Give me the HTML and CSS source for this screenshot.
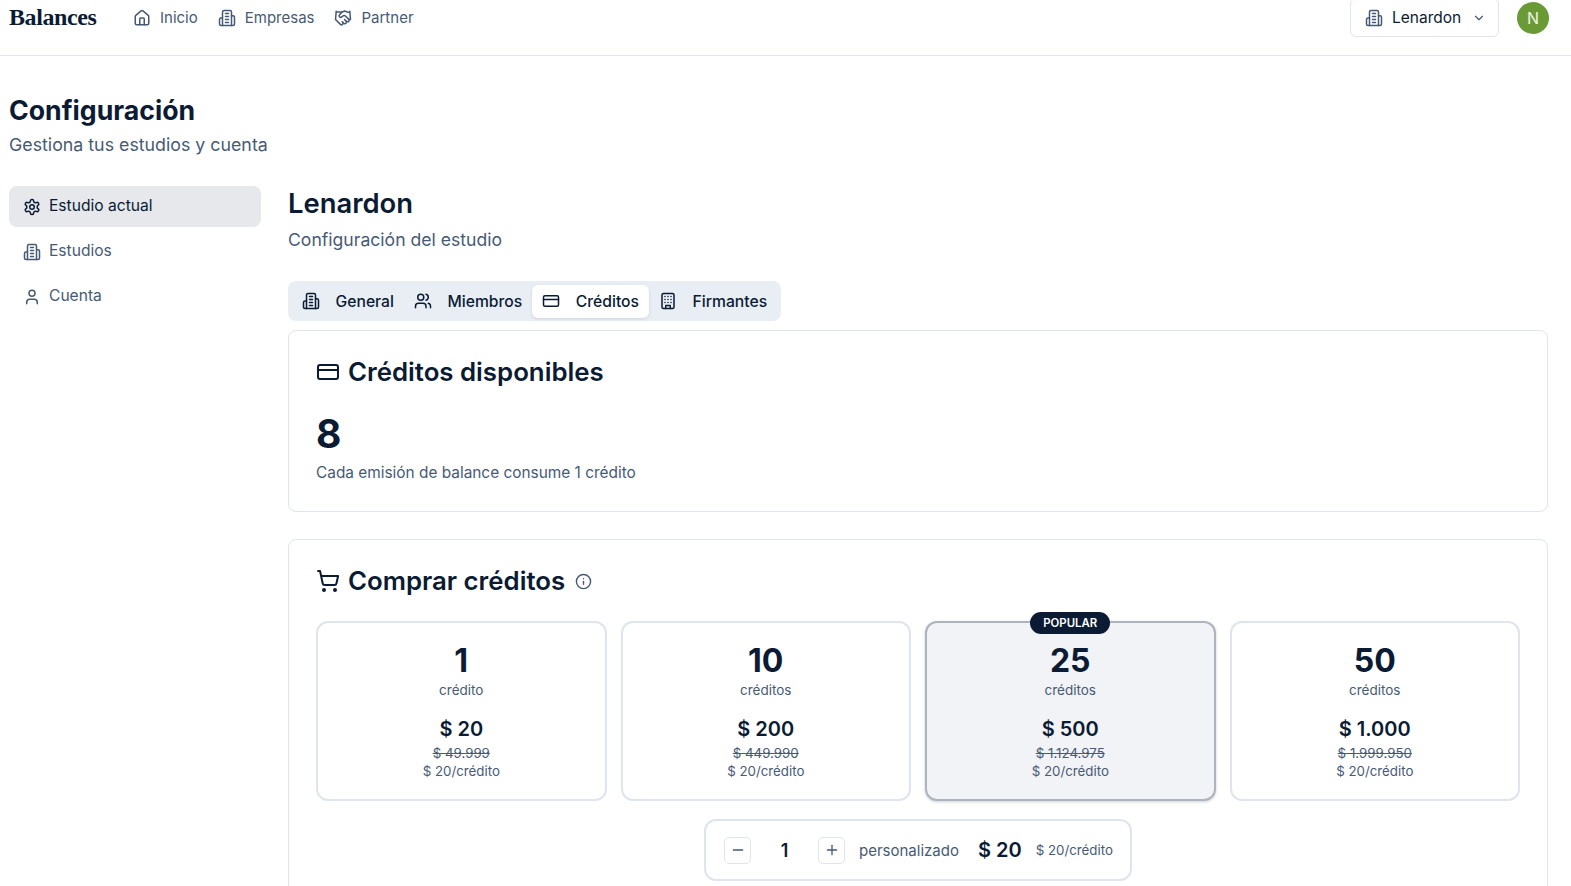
FILE: index.html
```html
<!DOCTYPE HTML>

<html lang="es">
<head>
<meta charset="UTF-8">
<meta name="viewport" content="width=device-width, initial-scale=1">
<title>Balances</title>
<link rel="stylesheet" href="styles.css">
</head>

<body>

<!-- Iconos -->
<svg class="sprite" aria-hidden="true">
    <symbol id="i-home" viewBox="0 0 24 24"><path d="M15 21v-8a1 1 0 0 0-1-1h-4a1 1 0 0 0-1 1v8"/><path d="M3 10a2 2 0 0 1 .709-1.528l7-5.999a2 2 0 0 1 2.582 0l7 5.999A2 2 0 0 1 21 10v9a2 2 0 0 1-2 2H5a2 2 0 0 1-2-2z"/></symbol>
    <symbol id="i-building" viewBox="0 0 24 24"><path d="M6 22V4a2 2 0 0 1 2-2h8a2 2 0 0 1 2 2v18Z"/><path d="M6 12H4a2 2 0 0 0-2 2v6a2 2 0 0 0 2 2h2"/><path d="M18 9h2a2 2 0 0 1 2 2v9a2 2 0 0 1-2 2h-2"/><path d="M10 6h4"/><path d="M10 10h4"/><path d="M10 14h4"/><path d="M10 18h4"/></symbol>
    <symbol id="i-handshake" viewBox="0 0 24 24"><path d="m11 17 2 2a1 1 0 1 0 3-3"/><path d="m14 14 2.5 2.5a1 1 0 1 0 3-3l-3.88-3.88a3 3 0 0 0-4.24 0l-.88.88a1 1 0 1 1-3-3l2.81-2.81a5.79 5.79 0 0 1 7.06-.87l.47.28a2 2 0 0 0 1.42.25L21 4"/><path d="m21 3 1 11h-2"/><path d="M3 3 2 14l6.5 6.5a1 1 0 1 0 3-3"/><path d="M3 4h8"/></symbol>
    <symbol id="i-settings" viewBox="0 0 24 24"><path d="M12.22 2h-.44a2 2 0 0 0-2 2v.18a2 2 0 0 1-1 1.73l-.43.25a2 2 0 0 1-2 0l-.15-.08a2 2 0 0 0-2.73.73l-.22.38a2 2 0 0 0 .73 2.73l.15.1a2 2 0 0 1 1 1.72v.51a2 2 0 0 1-1 1.74l-.15.09a2 2 0 0 0-.73 2.73l.22.38a2 2 0 0 0 2.73.73l.15-.08a2 2 0 0 1 2 0l.43.25a2 2 0 0 1 1 1.73V20a2 2 0 0 0 2 2h.44a2 2 0 0 0 2-2v-.18a2 2 0 0 1 1-1.73l.43-.25a2 2 0 0 1 2 0l.15.08a2 2 0 0 0 2.73-.73l.22-.39a2 2 0 0 0-.73-2.73l-.15-.08a2 2 0 0 1-1-1.74v-.5a2 2 0 0 1 1-1.74l.15-.09a2 2 0 0 0 .73-2.73l-.22-.38a2 2 0 0 0-2.73-.73l-.15.08a2 2 0 0 1-2 0l-.43-.25a2 2 0 0 1-1-1.73V4a2 2 0 0 0-2-2z"/><circle cx="12" cy="12" r="3"/></symbol>
    <symbol id="i-user" viewBox="0 0 24 24"><path d="M19 21v-2a4 4 0 0 0-4-4H9a4 4 0 0 0-4 4v2"/><circle cx="12" cy="7" r="4"/></symbol>
    <symbol id="i-users" viewBox="0 0 24 24"><path d="M16 21v-2a4 4 0 0 0-4-4H6a4 4 0 0 0-4 4v2"/><circle cx="9" cy="7" r="4"/><path d="M22 21v-2a4 4 0 0 0-3-3.87"/><path d="M16 3.13a4 4 0 0 1 0 7.75"/></symbol>
    <symbol id="i-card" viewBox="0 0 24 24"><rect x="2" y="5" width="20" height="14" rx="2"/><path d="M2 10h20"/></symbol>
    <symbol id="i-office" viewBox="0 0 24 24"><rect x="4" y="2" width="16" height="20" rx="2"/><path d="M9 22v-4h6v4"/><path d="M8 6h.01M12 6h.01M16 6h.01M8 10h.01M12 10h.01M16 10h.01M8 14h.01M12 14h.01M16 14h.01"/></symbol>
    <symbol id="i-cart" viewBox="0 0 24 24"><circle cx="8" cy="21" r="1"/><circle cx="19" cy="21" r="1"/><path d="M2.05 2.05h2l2.66 12.42a2 2 0 0 0 2 1.58h9.78a2 2 0 0 0 1.95-1.57l1.65-7.43H5.12"/></symbol>
    <symbol id="i-info" viewBox="0 0 24 24"><circle cx="12" cy="12" r="10"/><path d="M12 16v-4"/><path d="M12 8h.01"/></symbol>
    <symbol id="i-chevron" viewBox="0 0 24 24"><path d="m6 9 6 6 6-6"/></symbol>
    <symbol id="i-minus" viewBox="0 0 24 24"><path d="M5 12h14"/></symbol>
    <symbol id="i-plus" viewBox="0 0 24 24"><path d="M5 12h14"/><path d="M12 5v14"/></symbol>
</svg>

<!-- Barra superior -->
<header class="topbar">
    <div class="topbar-row">
        <span class="logo">Balances</span>
        <nav class="topnav">
            <a class="topnav-item"><svg class="icon"><use href="#i-home"/></svg>Inicio</a>
            <a class="topnav-item"><svg class="icon"><use href="#i-building"/></svg>Empresas</a>
            <a class="topnav-item"><svg class="icon"><use href="#i-handshake"/></svg>Partner</a>
        </nav>
        <button class="studio-select">
            <svg class="icon"><use href="#i-building"/></svg>
            <span>Lenardon</span>
            <svg class="icon-small"><use href="#i-chevron"/></svg>
        </button>
        <span class="avatar">N</span>
    </div>
</header>

<div class="page">
    <h1 class="page-title">Configuración</h1>
    <p class="page-sub">Gestiona tus estudios y cuenta</p>

    <div class="layout">
        <!-- Menu lateral -->
        <aside class="sidebar">
            <a class="side-item active"><svg class="icon"><use href="#i-settings"/></svg>Estudio actual</a>
            <a class="side-item"><svg class="icon"><use href="#i-building"/></svg>Estudios</a>
            <a class="side-item"><svg class="icon"><use href="#i-user"/></svg>Cuenta</a>
        </aside>

        <main class="content">
            <h2 class="studio-name">Lenardon</h2>
            <p class="studio-sub">Configuración del estudio</p>

            <div class="tabs">
                <a class="tab"><svg class="icon"><use href="#i-building"/></svg>General</a>
                <a class="tab"><svg class="icon"><use href="#i-users"/></svg>Miembros</a>
                <a class="tab active"><svg class="icon"><use href="#i-card"/></svg>Créditos</a>
                <a class="tab"><svg class="icon"><use href="#i-office"/></svg>Firmantes</a>
            </div>

            <section class="panel panel-balance">
                <h3 class="panel-title"><svg class="icon-title"><use href="#i-card"/></svg>Créditos disponibles</h3>
                <div class="balance">8</div>
                <p class="balance-note">Cada emisión de balance consume 1 crédito</p>
            </section>

            <section class="panel panel-buy">
                <h3 class="panel-title"><svg class="icon-title"><use href="#i-cart"/></svg>Comprar créditos<svg class="icon-info"><use href="#i-info"/></svg></h3>

                <div class="packs">
                    <div class="pack">
                        <div class="pack-num">1</div>
                        <div class="pack-unit">crédito</div>
                        <div class="pack-price">$ 20</div>
                        <div class="pack-old">$ 49.999</div>
                        <div class="pack-rate">$ 20/crédito</div>
                    </div>
                    <div class="pack">
                        <div class="pack-num">10</div>
                        <div class="pack-unit">créditos</div>
                        <div class="pack-price">$ 200</div>
                        <div class="pack-old">$ 449.990</div>
                        <div class="pack-rate">$ 20/crédito</div>
                    </div>
                    <div class="pack popular">
                        <span class="badge">POPULAR</span>
                        <div class="pack-num">25</div>
                        <div class="pack-unit">créditos</div>
                        <div class="pack-price">$ 500</div>
                        <div class="pack-old">$ 1.124.975</div>
                        <div class="pack-rate">$ 20/crédito</div>
                    </div>
                    <div class="pack">
                        <div class="pack-num">50</div>
                        <div class="pack-unit">créditos</div>
                        <div class="pack-price">$ 1.000</div>
                        <div class="pack-old">$ 1.999.950</div>
                        <div class="pack-rate">$ 20/crédito</div>
                    </div>
                </div>

                <div class="custom-wrap">
                    <div class="custom">
                        <button class="step"><svg class="icon-step"><use href="#i-minus"/></svg></button>
                        <span class="custom-num">1</span>
                        <button class="step"><svg class="icon-step"><use href="#i-plus"/></svg></button>
                        <span class="custom-label">personalizado</span>
                        <span class="custom-price">$ 20</span>
                        <span class="custom-rate">$ 20/crédito</span>
                    </div>
                </div>
            </section>
        </main>
    </div>
</div>

</body>
</html>
```

FILE: styles.css
```css
html, body {
    margin: 0;
    height: 886px;
    overflow: hidden;
    font-family: Inter, "Liberation Sans", sans-serif;
    color: #0a1b33;
    background-color: white;
}

h1, h2, h3, p {
    margin: 0;
}

.sprite {
    display: none;
}

.icon, .icon-small, .icon-title, .icon-info, .icon-step {
    fill: none;
    stroke: currentColor;
    stroke-width: 2;
    stroke-linecap: round;
    stroke-linejoin: round;
    flex-shrink: 0;
}

.icon { width: 18px; height: 18px; }
.icon-small { width: 14px; height: 14px; }
.icon-title { width: 24px; height: 24px; }
.icon-info { width: 17px; height: 17px; color: #475a75; }
.icon-step { width: 16px; height: 16px; }

/* Barra superior */
.topbar {
    height: 55px;
    border-bottom: 1px solid #dfe5ec;
    padding: 0 22px 0 9px;
}

.topbar-row {
    display: flex;
    align-items: center;
    height: 35px;
}

.logo {
    font-family: "Liberation Serif", serif;
    font-weight: bold;
    font-size: 24px;
    letter-spacing: -0.4px;
    width: 124px;
}

.topnav {
    display: flex;
    gap: 20px;
    flex: 1;
}

.topnav-item {
    display: flex;
    align-items: center;
    gap: 9px;
    font-size: 15px;
    color: #475a75;
}

.studio-select {
    display: flex;
    align-items: center;
    gap: 9px;
    box-sizing: border-box;
    width: 149px;
    height: 39px;
    padding: 0 14px;
    margin-right: 18px;
    background: white;
    border: 1px solid #dfe5ec;
    border-radius: 6px;
    font: inherit;
    font-size: 15.5px;
    color: #0a1b33;
}

.studio-select .icon {
    color: #475a75;
}

.studio-select .icon-small {
    color: #475a75;
    margin-left: 2px;
}

.avatar {
    display: flex;
    align-items: center;
    justify-content: center;
    width: 32px;
    height: 32px;
    border-radius: 50%;
    background-color: #6a9a35;
    color: #eef5e6;
    font-size: 16px;
}

/* Pagina */
.page {
    padding: 38px 23px 0 9px;
}

.page-title {
    font-size: 26.7px;
    line-height: 32px;
    font-weight: 700;
}

.page-sub {
    margin-top: 7px;
    font-size: 17.8px;
    line-height: 24px;
    color: #475a75;
}

.layout {
    display: flex;
    gap: 27px;
    margin-top: 29px;
}

.sidebar {
    width: 252px;
    flex-shrink: 0;
    display: flex;
    flex-direction: column;
    gap: 4px;
}

.side-item {
    display: flex;
    align-items: center;
    gap: 8px;
    box-sizing: border-box;
    height: 41px;
    padding: 0 0 2px 14px;
    border-radius: 8px;
    font-size: 15.6px;
    color: #475a75;
}

.side-item .icon {
    margin-top: 2px;
}

.side-item.active {
    background-color: #e6e8ec;
    color: #0a1b33;
}

.content {
    flex: 1;
    min-width: 0;
}

.studio-name {
    font-size: 27.4px;
    line-height: 35px;
    font-weight: 600;
}

.studio-sub {
    margin-top: 7px;
    font-size: 17.6px;
    line-height: 24px;
    color: #475a75;
}

/* Pestanas */
.tabs {
    display: inline-flex;
    align-items: center;
    height: 40px;
    padding: 0 4px;
    margin-top: 29px;
    background-color: #e9eef5;
    border-radius: 8px;
    vertical-align: top;
}

.tab {
    display: flex;
    align-items: center;
    gap: 15.5px;
    height: 33px;
    padding: 0 10px;
    border-radius: 6px;
    font-size: 15.7px;
    font-weight: 500;
}

.tab.active {
    background-color: white;
    box-shadow: 0 1px 3px rgba(10, 27, 51, 0.12);
}

/* Tarjetas */
.panel {
    box-sizing: border-box;
    border: 1px solid #dfe5ec;
    border-radius: 8px;
    padding: 0 27px;
}

.panel-balance {
    margin-top: 9px;
    height: 182px;
    padding-top: 21px;
}

.panel-buy {
    margin-top: 27px;
    padding-top: 21px;
    height: 420px;
}

.panel-title {
    display: flex;
    align-items: center;
    gap: 8px;
    font-size: 25.8px;
    line-height: 40px;
    font-weight: 600;
}

.icon-info {
    margin-left: 2px;
}

.balance {
    margin-top: 18px;
    font-size: 39px;
    line-height: 48px;
    font-weight: 700;
}

.balance-note {
    margin-top: 4px;
    font-size: 15.4px;
    line-height: 22px;
    color: #475a75;
}

.packs {
    display: grid;
    grid-template-columns: repeat(4, 1fr);
    gap: 14px;
    margin-top: 20px;
}

.pack {
    position: relative;
    box-sizing: border-box;
    height: 180px;
    padding-top: 19px;
    border: 2px solid #dfe5ec;
    border-radius: 12px;
    text-align: center;
}

.pack.popular {
    background-color: #f2f3f6;
    border-color: #aeb3be;
    box-shadow: 0 1px 3px rgba(10, 27, 51, 0.2);
}

.badge {
    position: absolute;
    top: -11px;
    left: 50%;
    transform: translateX(-50%);
    padding: 0 13px;
    line-height: 22px;
    border-radius: 11px;
    background-color: #0a1b33;
    color: white;
    font-size: 11.4px;
    font-weight: 600;
    white-space: nowrap;
}

.pack-num {
    font-size: 32px;
    line-height: 38px;
    font-weight: 700;
}

.pack-unit {
    font-size: 13.5px;
    line-height: 20px;
    color: #475a75;
}

.pack-price {
    margin-top: 15px;
    font-size: 20px;
    line-height: 28px;
    font-weight: 600;
}

.pack-old {
    margin-top: 1px;
    font-size: 13.3px;
    line-height: 18px;
    color: #475a75;
    text-decoration: line-through;
}

.pack-rate {
    font-size: 13.3px;
    line-height: 18px;
    color: #475a75;
}

/* Cantidad personalizada */
.custom-wrap {
    display: flex;
    justify-content: center;
    margin-top: 18px;
}

.custom {
    display: flex;
    align-items: center;
    box-sizing: border-box;
    width: 428px;
    height: 62px;
    padding: 0 18px;
    border: 2px solid #dfe5ec;
    border-radius: 12px;
    white-space: nowrap;
}

.step {
    display: flex;
    align-items: center;
    justify-content: center;
    flex-shrink: 0;
    width: 27px;
    height: 27px;
    padding: 0;
    background: white;
    border: 1px solid #dfe5ec;
    border-radius: 5px;
    color: #475a75;
}

.custom-num {
    width: 67px;
    flex-shrink: 0;
    text-align: center;
    font-size: 18px;
    font-weight: 600;
}

.custom-label {
    margin-left: 14px;
    font-size: 15px;
    color: #475a75;
}

.custom-price {
    margin-left: 19px;
    font-size: 20px;
    font-weight: 600;
}

.custom-rate {
    margin-left: 14px;
    font-size: 13.3px;
    color: #475a75;
}
```
